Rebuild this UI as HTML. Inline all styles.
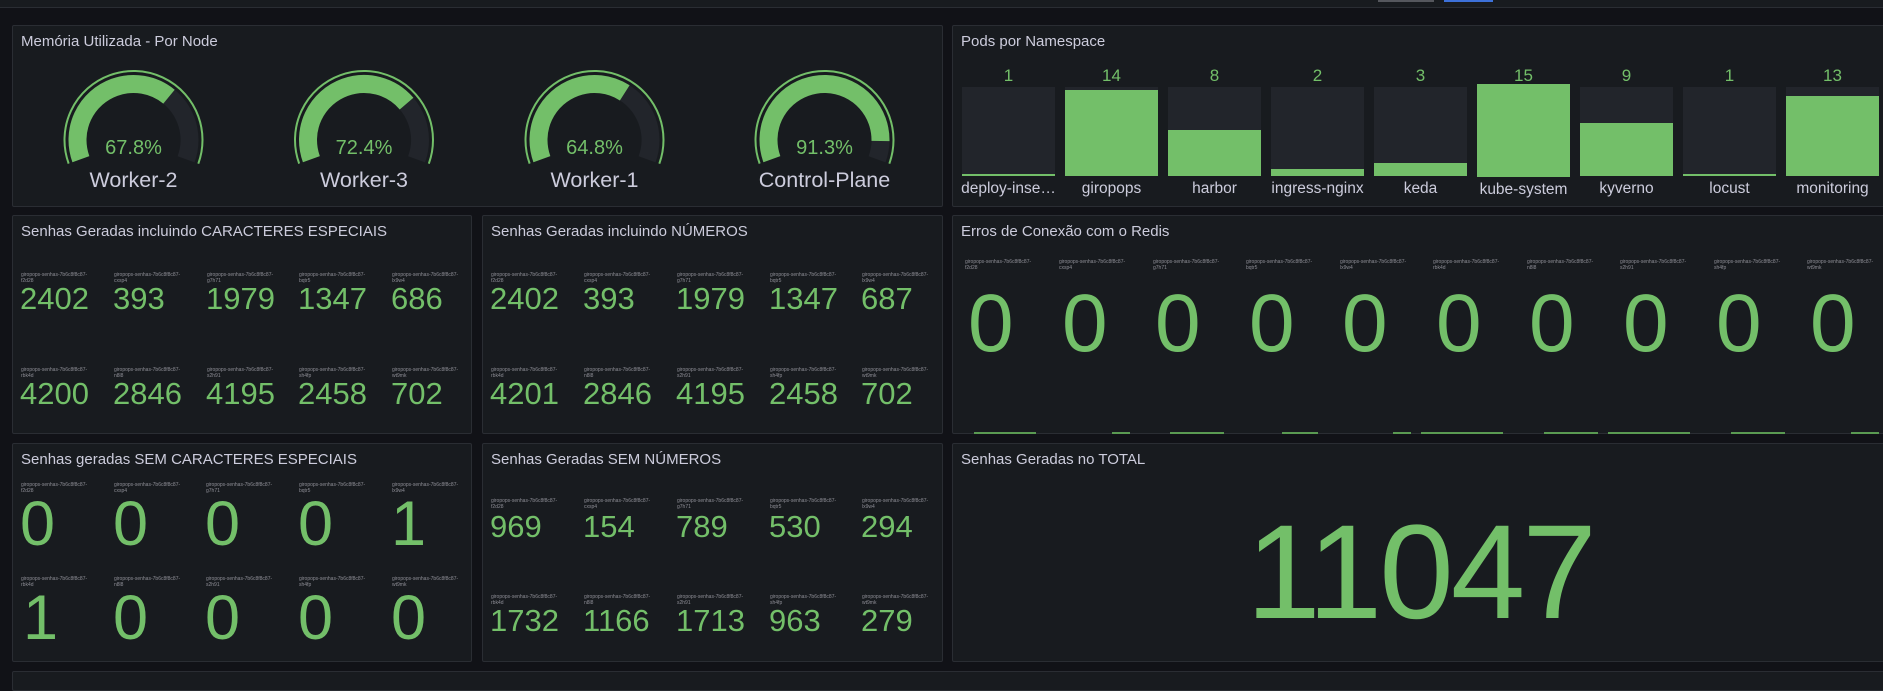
<!DOCTYPE html>
<html><head><meta charset="utf-8"><style>
*{margin:0;padding:0;box-sizing:border-box}
body{width:1883px;height:678px;background:#111217;overflow:hidden;position:relative;font-family:"Liberation Sans",sans-serif;color:#ccccdc}
.p{position:absolute;background:#181b1f;border:1px solid #2a2d33;border-radius:2px}
.t{position:absolute;left:8px;top:7px;font-size:15px;color:#ccccdc;white-space:nowrap}
.lb{position:absolute;font-size:5px;line-height:6px;color:#8e8e96;white-space:nowrap}
.n{position:absolute;color:#73bf69;white-space:nowrap;line-height:1}
</style></head><body>
<div style="position:absolute;left:0;top:0;width:1883px;height:8px;background:#181b1f;border-bottom:1px solid #2a2d33"></div>
<div style="position:absolute;left:1378px;top:0;width:56px;height:2px;background:#55575d"></div>
<div style="position:absolute;left:1444px;top:0;width:49px;height:2px;background:#3d71d9"></div>

<div class="p" style="left:12px;top:25px;width:931px;height:182px">
<div class="t">Memória Utilizada - Por Node</div>
</div>
<svg style="position:absolute;left:0;top:0" width="950" height="210">
<g fill="none">
<circle cx="133.5" cy="140" r="69" stroke="#73bf69" stroke-width="2" stroke-dasharray="264.9 500" transform="rotate(160 133.5 140)"/>
<circle cx="133.5" cy="140" r="56" stroke="#22252b" stroke-width="18" stroke-dasharray="215 500" transform="rotate(160 133.5 140)"/>
<circle cx="133.5" cy="140" r="56" stroke="#73bf69" stroke-width="18" stroke-dasharray="145.8 500" transform="rotate(160 133.5 140)"/>

<circle cx="364" cy="140" r="69" stroke="#73bf69" stroke-width="2" stroke-dasharray="264.9 500" transform="rotate(160 364 140)"/>
<circle cx="364" cy="140" r="56" stroke="#22252b" stroke-width="18" stroke-dasharray="215 500" transform="rotate(160 364 140)"/>
<circle cx="364" cy="140" r="56" stroke="#73bf69" stroke-width="18" stroke-dasharray="155.7 500" transform="rotate(160 364 140)"/>

<circle cx="594.5" cy="140" r="69" stroke="#73bf69" stroke-width="2" stroke-dasharray="264.9 500" transform="rotate(160 594.5 140)"/>
<circle cx="594.5" cy="140" r="56" stroke="#22252b" stroke-width="18" stroke-dasharray="215 500" transform="rotate(160 594.5 140)"/>
<circle cx="594.5" cy="140" r="56" stroke="#73bf69" stroke-width="18" stroke-dasharray="139.3 500" transform="rotate(160 594.5 140)"/>

<circle cx="824.5" cy="140" r="69" stroke="#73bf69" stroke-width="2" stroke-dasharray="264.9 500" transform="rotate(160 824.5 140)"/>
<circle cx="824.5" cy="140" r="56" stroke="#22252b" stroke-width="18" stroke-dasharray="215 500" transform="rotate(160 824.5 140)"/>
<circle cx="824.5" cy="140" r="56" stroke="#73bf69" stroke-width="18" stroke-dasharray="196.3 500" transform="rotate(160 824.5 140)"/>
</g>
<g font-family="Liberation Sans, sans-serif" text-anchor="middle">
<text x="133.5" y="154" font-size="20" fill="#73bf69">67.8%</text>
<text x="364" y="154" font-size="20" fill="#73bf69">72.4%</text>
<text x="594.5" y="154" font-size="20" fill="#73bf69">64.8%</text>
<text x="824.5" y="154" font-size="20" fill="#73bf69">91.3%</text>
<text x="133.5" y="187" font-size="21.5" fill="#ccccdc">Worker-2</text>
<text x="364" y="187" font-size="21.5" fill="#ccccdc">Worker-3</text>
<text x="594.5" y="187" font-size="21.5" fill="#ccccdc">Worker-1</text>
<text x="824.5" y="187" font-size="21.5" fill="#ccccdc">Control-Plane</text>
</g>
</svg>

<div class="p" style="left:952px;top:25px;width:935px;height:182px">
<div class="t">Pods por Namespace</div>
</div>
<svg style="position:absolute;left:0;top:0" width="1883" height="210">
<g fill="#22252b">
<rect x="962" y="87" width="93" height="89"/><rect x="1065" y="87" width="93" height="89"/><rect x="1168" y="87" width="93" height="89"/><rect x="1271" y="87" width="93" height="89"/><rect x="1374" y="87" width="93" height="89"/><rect x="1477" y="87" width="93" height="89"/><rect x="1580" y="87" width="93" height="89"/><rect x="1683" y="87" width="93" height="89"/><rect x="1786" y="87" width="93" height="89"/>
</g>
<g fill="#73bf69">
<rect x="962" y="174" width="93" height="2"/>
<rect x="1065" y="90" width="93" height="86"/>
<rect x="1168" y="130" width="93" height="46"/>
<rect x="1271" y="169" width="93" height="7"/>
<rect x="1374" y="163" width="93" height="13"/>
<rect x="1477" y="84" width="93" height="93"/>
<rect x="1580" y="123" width="93" height="53"/>
<rect x="1683" y="174" width="93" height="2"/>
<rect x="1786" y="96" width="93" height="80"/>
</g>
<g font-family="Liberation Sans, sans-serif" text-anchor="middle" font-size="17" fill="#73bf69">
<text x="1008.5" y="81">1</text><text x="1111.5" y="81">14</text><text x="1214.5" y="81">8</text><text x="1317.5" y="81">2</text><text x="1420.5" y="81">3</text><text x="1523.5" y="81">15</text><text x="1626.5" y="81">9</text><text x="1729.5" y="81">1</text><text x="1832.5" y="81">13</text>
</g>
<g font-family="Liberation Sans, sans-serif" text-anchor="middle" font-size="15.5" fill="#ccccdc">
<text x="1008.5" y="193">deploy-inse…</text><text x="1111.5" y="193">giropops</text><text x="1214.5" y="193">harbor</text><text x="1317.5" y="193">ingress-nginx</text><text x="1420.5" y="193">keda</text><text x="1523.5" y="194">kube-system</text><text x="1626.5" y="193">kyverno</text><text x="1729.5" y="193">locust</text><text x="1832.5" y="193">monitoring</text>
</g>
</svg>

<div class="p" style="left:12px;top:215px;width:460px;height:219px"><div class="t">Senhas Geradas incluindo CARACTERES ESPECIAIS</div></div>
<div class="p" style="left:482px;top:215px;width:461px;height:219px"><div class="t">Senhas Geradas incluindo NÚMEROS</div></div>
<div class="p" style="left:952px;top:215px;width:935px;height:219px"><div class="t">Erros de Conexão com o Redis</div></div>

<div class="p" style="left:12px;top:443px;width:460px;height:219px"><div class="t">Senhas geradas SEM CARACTERES ESPECIAIS</div></div>
<div class="p" style="left:482px;top:443px;width:461px;height:219px"><div class="t">Senhas Geradas SEM NÚMEROS</div></div>
<div class="p" style="left:952px;top:443px;width:935px;height:219px"><div class="t">Senhas Geradas no TOTAL</div></div>
<div class="p" style="left:12px;top:671px;width:1880px;height:20px"></div>

<div class="lb" style="left:21px;top:272px">giropops-senhas-7b6c8f8c87-<br>f2d28</div>
<div class="lb" style="left:114px;top:272px">giropops-senhas-7b6c8f8c87-<br>cxsp4</div>
<div class="lb" style="left:207px;top:272px">giropops-senhas-7b6c8f8c87-<br>g7h71</div>
<div class="lb" style="left:299px;top:272px">giropops-senhas-7b6c8f8c87-<br>bqtr5</div>
<div class="lb" style="left:392px;top:272px">giropops-senhas-7b6c8f8c87-<br>lx9w4</div>
<div class="n" style="left:20px;top:283px;font-size:31px">2402</div>
<div class="n" style="left:113px;top:283px;font-size:31px">393</div>
<div class="n" style="left:206px;top:283px;font-size:31px">1979</div>
<div class="n" style="left:298px;top:283px;font-size:31px">1347</div>
<div class="n" style="left:391px;top:283px;font-size:31px">686</div>
<div class="lb" style="left:21px;top:367px">giropops-senhas-7b6c8f8c87-<br>rbk4d</div>
<div class="lb" style="left:114px;top:367px">giropops-senhas-7b6c8f8c87-<br>n8l8</div>
<div class="lb" style="left:207px;top:367px">giropops-senhas-7b6c8f8c87-<br>s2h91</div>
<div class="lb" style="left:299px;top:367px">giropops-senhas-7b6c8f8c87-<br>sh4fp</div>
<div class="lb" style="left:392px;top:367px">giropops-senhas-7b6c8f8c87-<br>wt9mk</div>
<div class="n" style="left:20px;top:378px;font-size:31px">4200</div>
<div class="n" style="left:113px;top:378px;font-size:31px">2846</div>
<div class="n" style="left:206px;top:378px;font-size:31px">4195</div>
<div class="n" style="left:298px;top:378px;font-size:31px">2458</div>
<div class="n" style="left:391px;top:378px;font-size:31px">702</div>

<div class="lb" style="left:491px;top:272px">giropops-senhas-7b6c8f8c87-<br>f2d28</div>
<div class="lb" style="left:584px;top:272px">giropops-senhas-7b6c8f8c87-<br>cxsp4</div>
<div class="lb" style="left:677px;top:272px">giropops-senhas-7b6c8f8c87-<br>g7h71</div>
<div class="lb" style="left:770px;top:272px">giropops-senhas-7b6c8f8c87-<br>bqtr5</div>
<div class="lb" style="left:862px;top:272px">giropops-senhas-7b6c8f8c87-<br>lx9w4</div>
<div class="n" style="left:490px;top:283px;font-size:31px">2402</div>
<div class="n" style="left:583px;top:283px;font-size:31px">393</div>
<div class="n" style="left:676px;top:283px;font-size:31px">1979</div>
<div class="n" style="left:769px;top:283px;font-size:31px">1347</div>
<div class="n" style="left:861px;top:283px;font-size:31px">687</div>
<div class="lb" style="left:491px;top:367px">giropops-senhas-7b6c8f8c87-<br>rbk4d</div>
<div class="lb" style="left:584px;top:367px">giropops-senhas-7b6c8f8c87-<br>n8l8</div>
<div class="lb" style="left:677px;top:367px">giropops-senhas-7b6c8f8c87-<br>s2h91</div>
<div class="lb" style="left:770px;top:367px">giropops-senhas-7b6c8f8c87-<br>sh4fp</div>
<div class="lb" style="left:862px;top:367px">giropops-senhas-7b6c8f8c87-<br>wt9mk</div>
<div class="n" style="left:490px;top:378px;font-size:31px">4201</div>
<div class="n" style="left:583px;top:378px;font-size:31px">2846</div>
<div class="n" style="left:676px;top:378px;font-size:31px">4195</div>
<div class="n" style="left:769px;top:378px;font-size:31px">2458</div>
<div class="n" style="left:861px;top:378px;font-size:31px">702</div>

<div class="lb" style="left:965px;top:259px">giropops-senhas-7b6c8f8c87-<br>f2d28</div>
<div class="lb" style="left:1059px;top:259px">giropops-senhas-7b6c8f8c87-<br>cxsp4</div>
<div class="lb" style="left:1153px;top:259px">giropops-senhas-7b6c8f8c87-<br>g7h71</div>
<div class="lb" style="left:1246px;top:259px">giropops-senhas-7b6c8f8c87-<br>bqtr5</div>
<div class="lb" style="left:1340px;top:259px">giropops-senhas-7b6c8f8c87-<br>lx9w4</div>
<div class="lb" style="left:1433px;top:259px">giropops-senhas-7b6c8f8c87-<br>rbk4d</div>
<div class="lb" style="left:1527px;top:259px">giropops-senhas-7b6c8f8c87-<br>n8l8</div>
<div class="lb" style="left:1620px;top:259px">giropops-senhas-7b6c8f8c87-<br>s2h91</div>
<div class="lb" style="left:1714px;top:259px">giropops-senhas-7b6c8f8c87-<br>sh4fp</div>
<div class="lb" style="left:1807px;top:259px">giropops-senhas-7b6c8f8c87-<br>wt9mk</div>
<div class="n" style="left:968px;top:283px;font-size:82px">0</div>
<div class="n" style="left:1062px;top:283px;font-size:82px">0</div>
<div class="n" style="left:1155px;top:283px;font-size:82px">0</div>
<div class="n" style="left:1249px;top:283px;font-size:82px">0</div>
<div class="n" style="left:1342px;top:283px;font-size:82px">0</div>
<div class="n" style="left:1436px;top:283px;font-size:82px">0</div>
<div class="n" style="left:1529px;top:283px;font-size:82px">0</div>
<div class="n" style="left:1623px;top:283px;font-size:82px">0</div>
<div class="n" style="left:1716px;top:283px;font-size:82px">0</div>
<div class="n" style="left:1810px;top:283px;font-size:82px">0</div>
<svg style="position:absolute;left:0;top:432px" width="1883" height="3"><g fill="#5a9a52">
<rect x="974" y="0" width="62" height="2"/><rect x="1112" y="0" width="18" height="2"/><rect x="1170" y="0" width="54" height="2"/><rect x="1282" y="0" width="36" height="2"/><rect x="1393" y="0" width="18" height="2"/><rect x="1421" y="0" width="82" height="2"/><rect x="1544" y="0" width="54" height="2"/><rect x="1608" y="0" width="82" height="2"/><rect x="1731" y="0" width="54" height="2"/><rect x="1851" y="0" width="28" height="2"/></g></svg>

<div class="lb" style="left:21px;top:482px">giropops-senhas-7b6c8f8c87-<br>f2d28</div>
<div class="lb" style="left:114px;top:482px">giropops-senhas-7b6c8f8c87-<br>cxsp4</div>
<div class="lb" style="left:206px;top:482px">giropops-senhas-7b6c8f8c87-<br>g7h71</div>
<div class="lb" style="left:299px;top:482px">giropops-senhas-7b6c8f8c87-<br>bqtr5</div>
<div class="lb" style="left:392px;top:482px">giropops-senhas-7b6c8f8c87-<br>lx9w4</div>
<div class="n" style="left:20px;top:493px;font-size:63px">0</div>
<div class="n" style="left:113px;top:493px;font-size:63px">0</div>
<div class="n" style="left:205px;top:493px;font-size:63px">0</div>
<div class="n" style="left:298px;top:493px;font-size:63px">0</div>
<div class="n" style="left:391px;top:493px;font-size:63px">1</div>
<div class="lb" style="left:21px;top:576px">giropops-senhas-7b6c8f8c87-<br>rbk4d</div>
<div class="lb" style="left:114px;top:576px">giropops-senhas-7b6c8f8c87-<br>n8l8</div>
<div class="lb" style="left:206px;top:576px">giropops-senhas-7b6c8f8c87-<br>s2h91</div>
<div class="lb" style="left:299px;top:576px">giropops-senhas-7b6c8f8c87-<br>sh4fp</div>
<div class="lb" style="left:392px;top:576px">giropops-senhas-7b6c8f8c87-<br>wt9mk</div>
<div class="n" style="left:23px;top:587px;font-size:63px">1</div>
<div class="n" style="left:113px;top:587px;font-size:63px">0</div>
<div class="n" style="left:205px;top:587px;font-size:63px">0</div>
<div class="n" style="left:298px;top:587px;font-size:63px">0</div>
<div class="n" style="left:391px;top:587px;font-size:63px">0</div>

<div class="lb" style="left:491px;top:498px">giropops-senhas-7b6c8f8c87-<br>f2d28</div>
<div class="lb" style="left:584px;top:498px">giropops-senhas-7b6c8f8c87-<br>cxsp4</div>
<div class="lb" style="left:677px;top:498px">giropops-senhas-7b6c8f8c87-<br>g7h71</div>
<div class="lb" style="left:770px;top:498px">giropops-senhas-7b6c8f8c87-<br>bqtr5</div>
<div class="lb" style="left:862px;top:498px">giropops-senhas-7b6c8f8c87-<br>lx9w4</div>
<div class="n" style="left:490px;top:511px;font-size:31px">969</div>
<div class="n" style="left:583px;top:511px;font-size:31px">154</div>
<div class="n" style="left:676px;top:511px;font-size:31px">789</div>
<div class="n" style="left:769px;top:511px;font-size:31px">530</div>
<div class="n" style="left:861px;top:511px;font-size:31px">294</div>
<div class="lb" style="left:491px;top:594px">giropops-senhas-7b6c8f8c87-<br>rbk4d</div>
<div class="lb" style="left:584px;top:594px">giropops-senhas-7b6c8f8c87-<br>n8l8</div>
<div class="lb" style="left:677px;top:594px">giropops-senhas-7b6c8f8c87-<br>s2h91</div>
<div class="lb" style="left:770px;top:594px">giropops-senhas-7b6c8f8c87-<br>sh4fp</div>
<div class="lb" style="left:862px;top:594px">giropops-senhas-7b6c8f8c87-<br>wt9mk</div>
<div class="n" style="left:490px;top:605px;font-size:31px">1732</div>
<div class="n" style="left:583px;top:605px;font-size:31px">1166</div>
<div class="n" style="left:676px;top:605px;font-size:31px">1713</div>
<div class="n" style="left:769px;top:605px;font-size:31px">963</div>
<div class="n" style="left:861px;top:605px;font-size:31px">279</div>

<div class="n" style="left:1220px;top:506px;font-size:134px;width:400px;text-align:center;letter-spacing:-3px">11047</div>
</body></html>
